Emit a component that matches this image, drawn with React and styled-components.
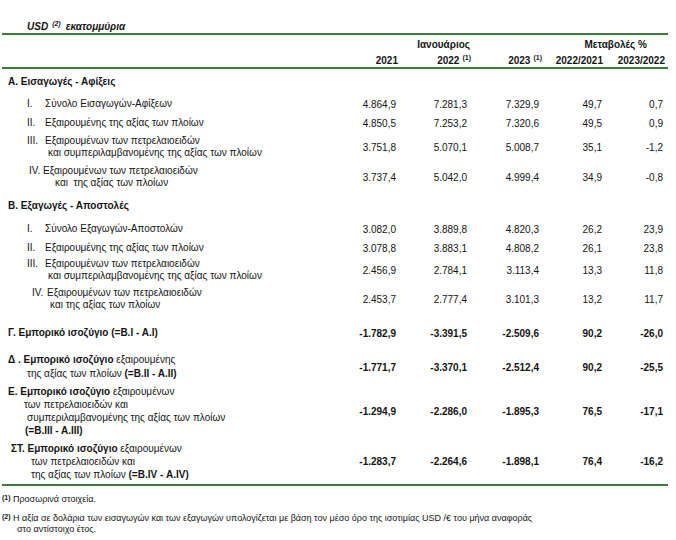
import React from "react";
import styled, { createGlobalStyle } from "styled-components";

const GREEN = "#3a7a35";
const COLS = "338px 56px 71px 72px 63px 61px";

const Global = createGlobalStyle`
  html, body { margin: 0; padding: 0; background: #fff; }
  body { font-family: "Liberation Sans", Arial, sans-serif; color: #141414; }
`;

const Page = styled.div`
  width: 666px;
  margin-left: 2px;
  font-size: 10px;
`;

const Title = styled.div`
  height: 33px;
  box-sizing: border-box;
  padding: 21px 0 0 25px;
  line-height: 12px;
  font-weight: bold;
  font-style: italic;
`;

const Sup = styled.sup`
  font-size: 7px;
  font-weight: bold;
  vertical-align: ${(p) => p.$up || 4}px;
  line-height: 0;
  margin: 0 ${(p) => p.$gap || 0}px 0 ${(p) => p.$lead || 3}px;
`;

const Header = styled.div`
  border-top: 2px solid ${GREEN};
  border-bottom: 2px solid ${GREEN};
`;

const Grid = styled.div`
  display: grid;
  grid-template-columns: ${COLS};
  align-items: center;
  height: ${(p) => p.$h}px;
`;

const HeadCell = styled.div`
  grid-column: ${(p) => p.$col};
  text-align: right;
  font-weight: bold;
  padding-right: ${(p) => p.$pr || 0}px;
  margin-right: ${(p) => p.$mr || 0}px;
  white-space: nowrap;
`;

const Table = styled.div`
  border-bottom: 2px solid ${GREEN};
`;

const Label = styled.div`
  line-height: ${(p) => p.$lh || 12}px;
`;

const Line = styled.div`
  padding-left: ${(p) => p.$x}px;
  white-space: pre;
  font-weight: ${(p) => (p.$bold ? "bold" : "normal")};
`;

const Num = styled.span`
  display: inline-block;
  width: ${(p) => p.$w}px;
`;

const B = styled.b`
  font-weight: bold;
`;

const NumCell = styled.div`
  text-align: right;
  font-weight: ${(p) => (p.$bold ? "bold" : "normal")};
  white-space: nowrap;
`;

const Notes = styled.div`
  padding-top: 8px;
  font-size: 9px;
  line-height: 11px;
`;

const Note = styled.div`
  display: flex;
  margin-top: ${(p) => p.$mt || 0}px;
`;

const Mark = styled.span`
  width: 11px;
  flex: none;
  font-size: 7px;
  font-weight: bold;
  line-height: 7px;
`;

const Cont = styled.div`
  padding-left: 4px;
`;

const rows = [
  { h: 26, lh: 12, lines: [{ x: 6, bold: true, t: "Α. Εισαγωγές - Αφίξεις" }] },
  { h: 18, lines: [{ x: 25, num: "I.", nw: 18, t: "Σύνολο Εισαγωγών-Αφίξεων" }], v: ["4.864,9", "7.281,3", "7.329,9", "49,7", "0,7"] },
  { h: 20, lines: [{ x: 25, num: "II.", nw: 18, t: "Εξαιρουμένης της αξίας των πλοίων" }], v: ["4.850,5", "7.253,2", "7.320,6", "49,5", "0,9"] },
  {
    h: 28,
    lines: [
      { x: 25, num: "III.", nw: 18, t: "Εξαιρουμένων των πετρελαιοειδών" },
      { x: 46, t: "και συμπεριλαμβανομένης της αξίας των πλοίων" },
    ],
    v: ["3.751,8", "5.070,1", "5.008,7", "35,1", "-1,2"],
  },
  {
    h: 32,
    lines: [
      { x: 27, num: "IV.", nw: 14, t: "Εξαιρουμένων των πετρελαιοειδών" },
      { x: 53, t: "και  της αξίας των πλοίων" },
    ],
    v: ["3.737,4", "5.042,0", "4.999,4", "34,9", "-0,8"],
  },
  { h: 26, lines: [{ x: 6, bold: true, t: "Β. Εξαγωγές - Αποστολές" }] },
  { h: 20, lines: [{ x: 25, num: "I.", nw: 18, t: "Σύνολο Εξαγωγών-Αποστολών" }], v: ["3.082,0", "3.889,8", "4.820,3", "26,2", "23,9"] },
  { h: 18, lines: [{ x: 25, num: "II.", nw: 18, t: "Εξαιρουμένης της αξίας των πλοίων" }], v: ["3.078,8", "3.883,1", "4.808,2", "26,1", "23,8"] },
  {
    h: 26,
    lines: [
      { x: 25, num: "III.", nw: 18, t: "Εξαιρουμένων των πετρελαιοειδών" },
      { x: 46, t: "και συμπεριλαμβανομένης της αξίας των πλοίων" },
    ],
    v: ["2.456,9", "2.784,1", "3.113,4", "13,3", "11,8"],
  },
  {
    h: 32,
    lines: [
      { x: 30, num: "IV.", nw: 15, t: "Εξαιρουμένων των πετρελαιοειδών" },
      { x: 48, t: "και της αξίας των πλοίων" },
    ],
    v: ["2.453,7", "2.777,4", "3.101,3", "13,2", "11,7"],
  },
  { h: 36, bold: true, lines: [{ x: 6, bold: true, t: "Γ. Εμπορικό ισοζύγιο (=Β.Ι - Α.Ι)" }], v: ["-1.782,9", "-3.391,5", "-2.509,6", "90,2", "-26,0"] },
  {
    h: 32,
    lh: 14,
    bold: true,
    lines: [
      { x: 6, parts: [["Δ . Εμπορικό ισοζύγιο", true], [" εξαιρουμένης", false]] },
      { x: 25, parts: [["της αξίας των πλοίων ", false], ["(=Β.ΙΙ - Α.ΙΙ)", true]] },
    ],
    v: ["-1.771,7", "-3.370,1", "-2.512,4", "90,2", "-25,5"],
  },
  {
    h: 56,
    lh: 13,
    bold: true,
    lines: [
      { x: 6, parts: [["Ε. Εμπορικό ισοζύγιο", true], [" εξαιρουμένων", false]] },
      { x: 22, t: "των πετρελαιοειδών και" },
      { x: 25, t: "συμπεριλαμβανομένης της αξίας των πλοίων" },
      { x: 23, bold: true, t: "(=Β.ΙΙΙ - Α.ΙΙΙ)" },
    ],
    v: ["-1.294,9", "-2.286,0", "-1.895,3", "76,5", "-17,1"],
  },
  {
    h: 45,
    lh: 13,
    bold: true,
    lines: [
      { x: 9, parts: [["ΣΤ. Εμπορικό ισοζύγιο", true], [" εξαιρουμένων", false]] },
      { x: 29, t: "των πετρελαιοειδών και" },
      { x: 29, parts: [["της αξίας των πλοίων ", false], ["(=Β.IV - Α.IV)", true]] },
    ],
    v: ["-1.283,7", "-2.264,6", "-1.898,1", "76,4", "-16,2"],
  },
];

function LabelLine({ l }) {
  return (
    <Line $x={l.x} $bold={l.bold}>
      {l.num && <Num $w={l.nw}>{l.num}</Num>}
      {l.parts
        ? l.parts.map(([t, b], i) => (b ? <B key={i}>{t}</B> : <span key={i}>{t}</span>))
        : l.t}
    </Line>
  );
}

export default function App() {
  return (
    <>
      <Global />
      <Page>
        <Title>
          USD<Sup $lead={4} $gap={5}>(2)</Sup>εκατομμύρια
        </Title>
        <Header>
          <Grid $h={18}>
            <HeadCell $col="2 / 5" $pr={69}>Ιανουάριος</HeadCell>
            <HeadCell $col="5 / 7" $pr={16}>Μεταβολές %</HeadCell>
          </Grid>
          <Grid $h={14}>
            <HeadCell $col="2" $mr={-2}>2021</HeadCell>
            <HeadCell $col="3" $mr={-4}>
              2022<Sup>(1)</Sup>
            </HeadCell>
            <HeadCell $col="4" $mr={-3}>
              2023<Sup>(1)</Sup>
            </HeadCell>
            <HeadCell $col="5" $mr={-1}>2022/2021</HeadCell>
            <HeadCell $col="6" $mr={-2}>2023/2022</HeadCell>
          </Grid>
        </Header>
        <Table>
          {rows.map((r, i) => (
            <Grid key={i} $h={r.h}>
              <Label $lh={r.lh}>
                {r.lines.map((l, j) => (
                  <LabelLine key={j} l={l} />
                ))}
              </Label>
              {r.v &&
                r.v.map((v, k) => (
                  <NumCell key={k} $bold={r.bold}>
                    {v}
                  </NumCell>
                ))}
            </Grid>
          ))}
        </Table>
        <Notes>
          <Note>
            <Mark>(1)</Mark>
            <span>Προσωρινά στοιχεία.</span>
          </Note>
          <Note $mt={8}>
            <Mark>(2)</Mark>
            <div>
              Η αξία σε δολάρια των εισαγωγών και των εξαγωγών υπολογίζεται με βάση τον μέσο όρο της ισοτιμίας USD /€ του μήνα αναφοράς
              <Cont>στο αντίστοιχο έτος.</Cont>
            </div>
          </Note>
        </Notes>
      </Page>
    </>
  );
}
